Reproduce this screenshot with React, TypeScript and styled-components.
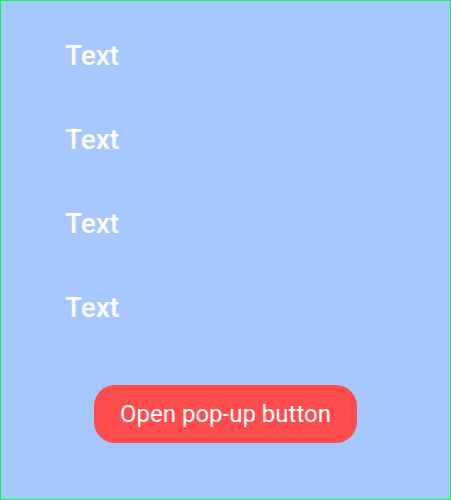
import React from "react";
import styled, { createGlobalStyle } from "styled-components";

const Global = createGlobalStyle`
  html, body { margin: 0; padding: 0; }
  body { font-family: Roboto, "Noto Sans", sans-serif; }
`;

const Screen = styled.div`
  box-sizing: border-box;
  width: 451px;
  height: 500px;
  border: 1px solid #00ff44;
  background: #a6c8ff;
  display: flex;
  flex-direction: column;
  padding: 39px 0 0 64px;
`;

const List = styled.div`
  display: flex;
  flex-direction: column;
  gap: 52px;
`;

const Label = styled.div`
  color: #ffffff;
  font-size: 28px;
  font-weight: 500;
  line-height: 32px;
`;

const Footer = styled.div`
  display: flex;
  padding-left: 29px;
  margin-top: 61px;
`;

const PopButton = styled.button`
  width: 263px;
  height: 58px;
  border: none;
  border-radius: 21px;
  background: #ff4d4d;
  color: #ffffff;
  font-family: Roboto, "Noto Sans", sans-serif;
  font-size: 24px;
  font-weight: 400;
  padding: 0;
`;

export default function App() {
  return (
    <>
      <Global />
      <Screen>
        <List>
          {["Text", "Text", "Text", "Text"].map((t, i) => (
            <Label key={i}>{t}</Label>
          ))}
        </List>
        <Footer>
          <PopButton>Open pop-up button</PopButton>
        </Footer>
      </Screen>
    </>
  );
}
